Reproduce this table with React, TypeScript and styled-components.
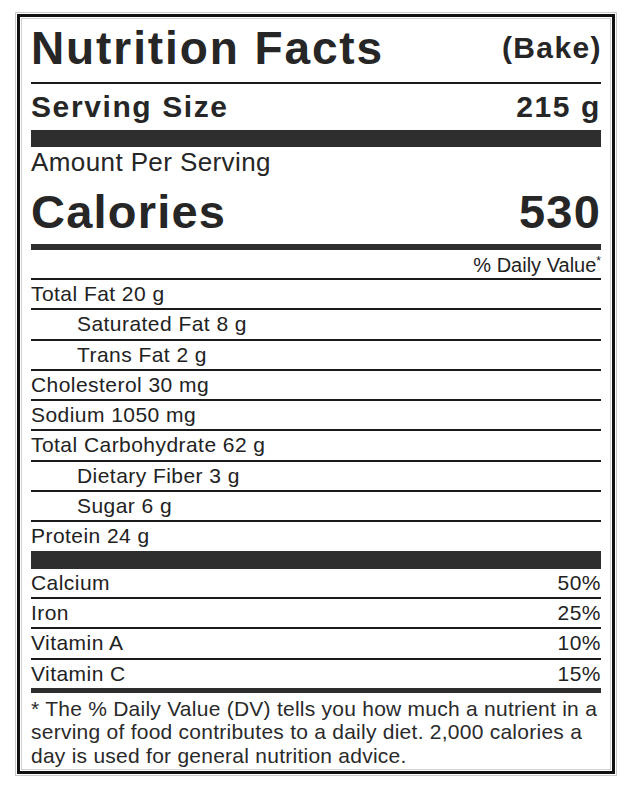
import { createGlobalStyle } from "styled-components";
import styled from "styled-components";

const GlobalStyle = createGlobalStyle`
  html, body {
    margin: 0;
    padding: 0;
    background: #ffffff;
  }
  body {
    font-family: "Liberation Sans", Arial, sans-serif;
    color: #222222;
  }
`;

const Frame = styled.div`
  box-sizing: border-box;
  width: 602px;
  margin: 12px 0 0 15px;
  border: 1px solid #c9c9c9;
  padding: 1px;
  background: #ffffff;
`;

const Border = styled.div`
  border: 3px solid #111111;
  padding: 1px;
`;

const Content = styled.div`
  border: 1px solid #d2d2d2;
  padding: 0 9px 2px 9px;
`;

const TitleRow = styled.div`
  display: flex;
  justify-content: space-between;
  padding: 1px 0 6px 0;
  border-bottom: 2px solid #1a1a1a;
`;

const Title = styled.h1`
  margin: 0;
  font-size: 46px;
  line-height: 56px;
  font-weight: 700;
  letter-spacing: 1.9px;
  color: #262626;
`;

const Bake = styled.span`
  font-size: 30px;
  line-height: 56px;
  font-weight: 700;
  letter-spacing: 1.4px;
  margin-right: -1px;
  color: #262626;
`;

const ServingRow = styled.div`
  display: flex;
  justify-content: space-between;
  font-size: 30px;
  line-height: 46px;
  font-weight: 700;
  letter-spacing: 1.6px;
  color: #262626;
`;

const ThickBar = styled.div<{ $h: number }>`
  height: ${(p) => p.$h}px;
  background: #2e2e2e;
`;

const AmountLine = styled.div`
  font-size: 26px;
  line-height: 30px;
  letter-spacing: 0.4px;
  color: #262626;
`;

const CaloriesRow = styled.div`
  display: flex;
  justify-content: space-between;
  padding-top: 3px;
  font-size: 47px;
  line-height: 64px;
  font-weight: 700;
  letter-spacing: 1.2px;
  color: #262626;
`;

const DailyHead = styled.div`
  text-align: right;
  font-size: 20px;
  line-height: 25px;
  height: 25px;
  padding-top: 3px;
  border-bottom: 2px solid #1a1a1a;
`;

const Star = styled.span`
  font-size: 12px;
  line-height: 0;
  vertical-align: 7px;
`;

const Row = styled.div<{ $indent?: boolean; $last?: boolean }>`
  display: flex;
  justify-content: space-between;
  font-size: 21px;
  line-height: 28.3px;
  letter-spacing: 0.45px;
  padding-left: ${(p) => (p.$indent ? 46 : 0)}px;
  border-bottom: ${(p) => (p.$last ? "none" : "2px solid #1a1a1a")};
  color: #222222;
`;

const Footnote = styled.p`
  margin: 0;
  padding-top: 4px;
  font-size: 21px;
  line-height: 23.5px;
  letter-spacing: 0.25px;
  color: #2a2a2a;
`;

const nutrients = [
  { label: "Total Fat 20 g" },
  { label: "Saturated Fat 8 g", indent: true },
  { label: "Trans Fat 2 g", indent: true },
  { label: "Cholesterol 30 mg" },
  { label: "Sodium 1050 mg" },
  { label: "Total Carbohydrate 62 g" },
  { label: "Dietary Fiber 3 g", indent: true },
  { label: "Sugar 6 g", indent: true },
  { label: "Protein 24 g" },
];

const vitamins = [
  { label: "Calcium", value: "50%" },
  { label: "Iron", value: "25%" },
  { label: "Vitamin A", value: "10%" },
  { label: "Vitamin C", value: "15%" },
];

const App = () => {
  return (
    <>
      <GlobalStyle />
      <Frame>
        <Border>
          <Content>
            <TitleRow>
              <Title>Nutrition Facts</Title>
              <Bake>(Bake)</Bake>
            </TitleRow>
            <ServingRow>
              <span>Serving Size</span>
              <span>215 g</span>
            </ServingRow>
            <ThickBar $h={17} />
            <AmountLine>Amount Per Serving</AmountLine>
            <CaloriesRow>
              <span>Calories</span>
              <span>530</span>
            </CaloriesRow>
            <ThickBar $h={6} />
            <DailyHead>
              % Daily Value<Star>*</Star>
            </DailyHead>
            {nutrients.map((n, i) => (
              <Row key={n.label} $indent={n.indent} $last={i === nutrients.length - 1}>
                <span>{n.label}</span>
              </Row>
            ))}
            <ThickBar $h={18} />
            {vitamins.map((v, i) => (
              <Row key={v.label} $last={i === vitamins.length - 1}>
                <span>{v.label}</span>
                <span>{v.value}</span>
              </Row>
            ))}
            <ThickBar $h={5} />
            <Footnote>
              * The % Daily Value (DV) tells you how much a nutrient in a serving of food
              contributes to a daily diet. 2,000 calories a day is used for general nutrition
              advice.
            </Footnote>
          </Content>
        </Border>
      </Frame>
    </>
  );
};

export default App;
